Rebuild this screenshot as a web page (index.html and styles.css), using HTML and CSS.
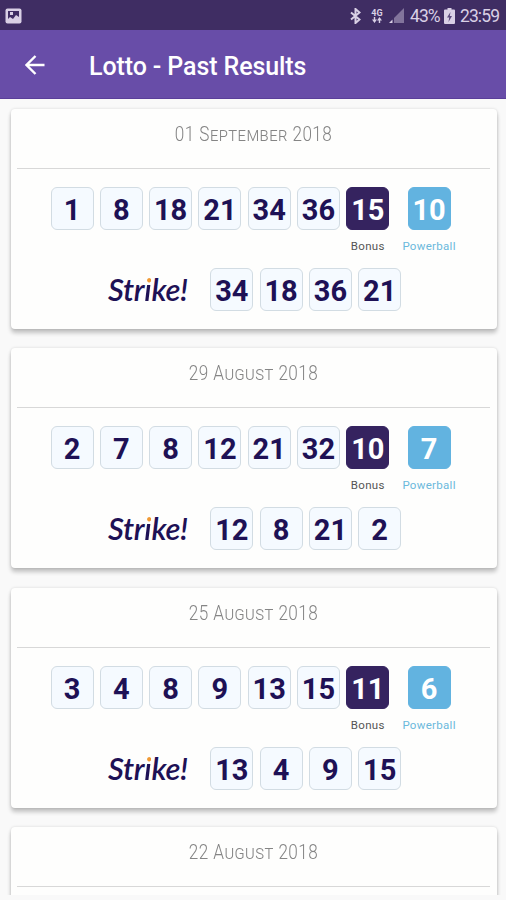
FILE: index.html
```
<!DOCTYPE html>
<html lang="en">
  <head>
    <meta charset="UTF-8" />
    <meta name="viewport" content="width=device-width, initial-scale=1.0" />
    <title>Lotto - Past Results</title>
    <link rel="stylesheet" href="styles.css">
  </head>
  <body>
    <div class="status-bar">
      <svg class="icon-picture" width="17" height="16" viewBox="0 0 17 16">
        <rect x="0.5" y="0.5" width="16" height="15" rx="2" fill="#d9d0e5" />
        <path d="M3 3h11v6l-3-2-3 4-3-2-2 2z" fill="#3f2d63" />
        <path d="M5 4h3v3H5z" fill="#d9d0e5" />
      </svg>
      <div class="status-icons">
        <svg class="icon-bluetooth" width="11" height="16" viewBox="0 0 11 16">
          <path d="M1 4.500l8.500 7L5.500 15V1l4 3.500L1 11.500" fill="none" stroke="#d9d0e5" stroke-width="2" />
        </svg>
        <div class="network">
          <span>4G</span>
          <svg width="10" height="6" viewBox="0 0 10 6">
            <path d="M0 2.500L2.500 6 5 2.500H3.200V0H1.800v2.500zM5 3.500L7.500 0 10 3.500H8.200V6H6.800V3.500z" fill="#d9d0e5" />
          </svg>
        </div>
        <svg class="icon-signal" width="15" height="15" viewBox="0 0 15 15">
          <path d="M15 0v15H5V10z" fill="#82749c" />
          <path d="M0 15l3.500-3.500V15z" fill="#d9d0e5" />
        </svg>
        <span class="percent">43%</span>
        <svg class="icon-battery" width="11" height="16" viewBox="0 0 11 16">
          <path d="M3.500 0h4v1.500H10a1 1 0 0 1 1 1V15a1 1 0 0 1-1 1H1a1 1 0 0 1-1-1V2.500a1 1 0 0 1 1-1h2.500z" fill="#d9d0e5" />
          <path d="M6.500 4L3 9.500h2.200L4.500 14 8 8H5.800z" fill="#5b4a7c" />
        </svg>
        <span class="clock">23:59</span>
      </div>
    </div>

    <header class="app-bar">
      <svg class="icon-back" width="20" height="20" viewBox="0 0 20 20">
        <path d="M19.500 10H1.500M10.500 1L1.500 10l9 9" fill="none" stroke="#fff" stroke-width="2.400" />
      </svg>
      <h1>Lotto - Past Results</h1>
    </header>

    <main class="results">
      <section class="card">
        <h2 class="date"><span>01 September 2018</span></h2>
        <div class="draw">
          <span class="ball">1</span>
          <span class="ball">8</span>
          <span class="ball">18</span>
          <span class="ball">21</span>
          <span class="ball">34</span>
          <span class="ball">36</span>
          <div class="extra">
            <span class="ball bonus">15</span>
            <span class="label">Bonus</span>
          </div>
          <div class="extra extra-powerball">
            <span class="ball powerball">10</span>
            <span class="label label-powerball">Powerball</span>
          </div>
        </div>
        <div class="strike">
          <span class="strike-logo">Str<span class="dot">i</span>ke!</span>
          <span class="ball">34</span>
          <span class="ball">18</span>
          <span class="ball">36</span>
          <span class="ball">21</span>
        </div>
      </section>

      <section class="card">
        <h2 class="date"><span>29 August 2018</span></h2>
        <div class="draw">
          <span class="ball">2</span>
          <span class="ball">7</span>
          <span class="ball">8</span>
          <span class="ball">12</span>
          <span class="ball">21</span>
          <span class="ball">32</span>
          <div class="extra">
            <span class="ball bonus">10</span>
            <span class="label">Bonus</span>
          </div>
          <div class="extra extra-powerball">
            <span class="ball powerball">7</span>
            <span class="label label-powerball">Powerball</span>
          </div>
        </div>
        <div class="strike">
          <span class="strike-logo">Str<span class="dot">i</span>ke!</span>
          <span class="ball">12</span>
          <span class="ball">8</span>
          <span class="ball">21</span>
          <span class="ball">2</span>
        </div>
      </section>

      <section class="card">
        <h2 class="date"><span>25 August 2018</span></h2>
        <div class="draw">
          <span class="ball">3</span>
          <span class="ball">4</span>
          <span class="ball">8</span>
          <span class="ball">9</span>
          <span class="ball">13</span>
          <span class="ball">15</span>
          <div class="extra">
            <span class="ball bonus">11</span>
            <span class="label">Bonus</span>
          </div>
          <div class="extra extra-powerball">
            <span class="ball powerball">6</span>
            <span class="label label-powerball">Powerball</span>
          </div>
        </div>
        <div class="strike">
          <span class="strike-logo">Str<span class="dot">i</span>ke!</span>
          <span class="ball">13</span>
          <span class="ball">4</span>
          <span class="ball">9</span>
          <span class="ball">15</span>
        </div>
      </section>

      <section class="card">
        <h2 class="date"><span>22 August 2018</span></h2>
      </section>
    </main>
  </body>
</html>
```
FILE: styles.css
```
:root {
  --status-color: #3f2d63;
  --primary-color: #684da8;
  --navy: #1e1155;
  --bonus-color: #35235f;
  --powerball-color: #62b3e0;
  --bg-color: #f9f9f9;
  --card-bg: #fefefd;
}

* {
  box-sizing: border-box;
  margin: 0;
  padding: 0;
}

body {
  display: flex;
  flex-direction: column;
  height: 900px;
  overflow: hidden;
  padding-bottom: 5px;
  font-family: Roboto, sans-serif;
  background-color: var(--bg-color);
}

svg {
  display: block;
  flex: none;
}

.status-bar {
  display: flex;
  flex: none;
  justify-content: space-between;
  align-items: center;
  height: 30px;
  padding: 1px 6px 0 5px;
  background: var(--status-color);
  color: #d9d0e5;
}

.status-icons {
  display: flex;
  align-items: center;
  font-size: 17.5px;
}

.network {
  display: flex;
  flex-direction: column;
  align-items: center;
  width: 12px;
  margin: 0 6px 0 10px;
  font-size: 9px;
  font-weight: 700;
  line-height: 8px;
}

.percent {
  width: 29px;
  margin: 0 5px 0 6px;
}

.clock {
  width: 40px;
  margin-left: 5px;
}

.percent,
.clock {
  white-space: nowrap;
  letter-spacing: -0.9px;
}

.app-bar {
  display: flex;
  flex: none;
  align-items: center;
  height: 69px;
  padding: 1px 25px 0;
  gap: 44px;
  background: var(--primary-color);
  border-bottom: 1px solid #5a3f99;
  color: #fff;
}

.app-bar h1 {
  padding-top: 3px;
  font-size: 25px;
  font-weight: 500;
  letter-spacing: -0.1px;
}

.results {
  flex: 1;
  min-height: 0;
  overflow: hidden;
  padding: 9.8px 9px 0 11px;
}

.card {
  height: 220px;
  margin-bottom: 19.5px;
  background: var(--card-bg);
  border-radius: 4px;
  box-shadow: 0 4px 4px rgba(0, 0, 0, 0.22), 0 0 3px rgba(0, 0, 0, 0.14);
}

.date {
  height: 60px;
  margin: 0 7px 0 6px;
  border-bottom: 1px solid #d8d8d8;
  font-size: 19.5px;
  font-weight: 300;
  line-height: 51px;
  text-align: center;
  font-variant: small-caps;
  letter-spacing: 0.5px;
  color: #858585;
}

/* squeezed to get a condensed face */
.date span {
  display: inline-block;
  transform: scaleX(0.88);
}

.draw,
.strike {
  display: flex;
  gap: 6.3px;
}

.draw {
  height: 81px;
  padding: 18px 0 0 39.5px;
}

.ball {
  flex: none;
  width: 43px;
  height: 43px;
  border: 1px solid #d2dce3;
  border-radius: 6px;
  background: #f5faff;
  color: var(--navy);
  font-size: 29px;
  font-weight: 700;
  line-height: 44px;
  text-align: center;
}

.bonus {
  border-color: var(--bonus-color);
  background: var(--bonus-color);
  color: #fff;
}

.powerball {
  border-color: var(--powerball-color);
  background: var(--powerball-color);
  color: #fff;
}

.extra {
  display: flex;
  flex-direction: column;
  align-items: center;
  width: 43px;
}

.extra-powerball {
  margin-left: 12px;
}

.label {
  margin-top: 9px;
  font-size: 11.5px;
  line-height: 14px;
  letter-spacing: 0.3px;
  color: #555;
}

.label-powerball {
  color: #6bb9dc;
}

.strike {
  padding: 18px 0 0 97px;
}

.strike-logo {
  width: 96px;
  font-family: Lato, sans-serif;
  font-size: 31px;
  font-style: italic;
  font-weight: 600;
  line-height: 42px;
  letter-spacing: -0.3px;
  color: var(--navy);
}

/* the dot of the i is orange */
.dot {
  background: linear-gradient(#f09a35 38%, var(--navy) 38%);
  -webkit-background-clip: text;
  background-clip: text;
  color: transparent;
}
```
